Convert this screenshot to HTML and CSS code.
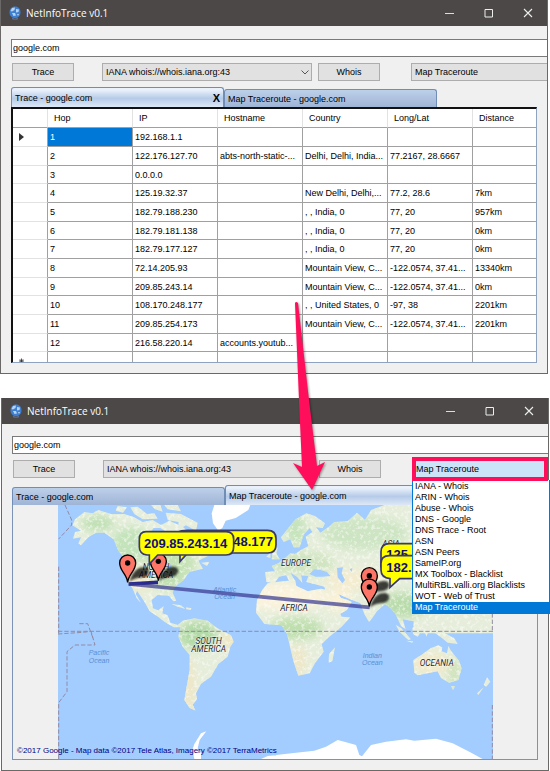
FILE: index.html
```html
<!DOCTYPE html>
<html lang="en">
<head>
<meta charset="utf-8">
<title>NetInfoTrace v0.1</title>
<link rel="stylesheet" href="styles.css">
</head>
<body>
<svg class="defs" width="0" height="0" aria-hidden="true">
  <symbol id="globe" viewBox="0 0 12 14">
    <path d="M6 0.500 C9.500 .5 11.500 3 11.500 6.500 C11.500 10 9 12 6 12 C3 12 .5 10 .5 6.500 C.5 3 2.500 .5 6 .5Z" fill="#3f7fd0"/>
    <path d="M3 2 L6 1.500 L5.500 4 L3 5.500 L1.500 5Z M7 3 L10 3.500 L9.500 6 L7 6.500Z M3 7 L6 7 L7 9.500 L4.500 10Z M8 8L10 8L9 10Z" fill="#b5d4f5"/>
    <path d="M3 12 Q6 13.500 9 12 L8.500 13.500 H3.500Z" fill="#5b80b5"/>
  </symbol>
  <symbol id="minimize" viewBox="0 0 10 10"><path d="M0 5.500H9" stroke="#ddd" fill="none"/></symbol>
  <symbol id="maximize" viewBox="0 0 10 10"><path d="M1 1.500H8.500V9H1Z" stroke="#eee" fill="none"/></symbol>
  <symbol id="close" viewBox="0 0 10 10"><path d="M1 1L9 9M9 1L1 9" stroke="#eee" stroke-width="1.100" fill="none"/></symbol>
</svg>

<main class="desktop">
  <section class="window window-trace">
    <header class="titlebar">
      <svg class="app-icon"><use href="#globe"/></svg>
      <h1>NetInfoTrace v0.1</h1>
      <div class="caption-buttons">
        <button aria-label="Minimize"><svg><use href="#minimize"/></svg></button>
        <button aria-label="Maximize"><svg><use href="#maximize"/></svg></button>
        <button aria-label="Close"><svg><use href="#close"/></svg></button>
      </div>
    </header>
    <div class="content">
      <input class="address" type="text" aria-label="Host" value="google.com">
      <div class="toolbar">
        <button class="btn">Trace</button>
        <div class="combo combo-server"><select aria-label="Whois server"><option>IANA whois://whois.iana.org:43</option></select>
          <svg class="chevron" viewBox="0 0 8 5"><path d="M.5 .5L4 4L7.500 .5" fill="none" stroke="#555"/></svg></div>
        <button class="btn">Whois</button>
        <div class="combo combo-tool"><select aria-label="Tool"><option>Map Traceroute</option></select></div>
      </div>
      <div class="tabs">
        <button class="tab active">Trace - google.com <b>X</b></button>
        <button class="tab">Map Traceroute - google.com</button>
      </div>
      <div class="grid">
        <table>
          <colgroup><col class="c-mark"><col class="c"><col class="c"><col class="c"><col class="c"><col class="c"><col></colgroup>
          <thead><tr><th></th><th>Hop</th><th>IP</th><th>Hostname</th><th>Country</th><th>Long/Lat</th><th>Distance</th></tr></thead>
          <tbody>
            <tr><th><svg class="marker" viewBox="0 0 5 8"><path d="M0 0L5 4L0 8Z" fill="#333"/></svg></th><td class="selected">1</td><td>192.168.1.1</td><td></td><td></td><td></td><td></td></tr>
            <tr><th></th><td>2</td><td>122.176.127.70</td><td>abts-north-static-...</td><td>Delhi, Delhi, India...</td><td>77.2167, 28.6667</td><td></td></tr>
            <tr><th></th><td>3</td><td>0.0.0.0</td><td></td><td></td><td></td><td></td></tr>
            <tr><th></th><td>4</td><td>125.19.32.37</td><td></td><td>New Delhi, Delhi,...</td><td>77.2, 28.6</td><td>7km</td></tr>
            <tr><th></th><td>5</td><td>182.79.188.230</td><td></td><td>, , India, 0</td><td>77, 20</td><td>957km</td></tr>
            <tr><th></th><td>6</td><td>182.79.181.138</td><td></td><td>, , India, 0</td><td>77, 20</td><td>0km</td></tr>
            <tr><th></th><td>7</td><td>182.79.177.127</td><td></td><td>, , India, 0</td><td>77, 20</td><td>0km</td></tr>
            <tr><th></th><td>8</td><td>72.14.205.93</td><td></td><td>Mountain View, C...</td><td>-122.0574, 37.41...</td><td>13340km</td></tr>
            <tr><th></th><td>9</td><td>209.85.243.14</td><td></td><td>Mountain View, C...</td><td>-122.0574, 37.41...</td><td>0km</td></tr>
            <tr><th></th><td>10</td><td>108.170.248.177</td><td></td><td>, , United States, 0</td><td>-97, 38</td><td>2201km</td></tr>
            <tr><th></th><td>11</td><td>209.85.254.173</td><td></td><td>Mountain View, C...</td><td>-122.0574, 37.41...</td><td>2201km</td></tr>
            <tr><th></th><td>12</td><td>216.58.220.14</td><td>accounts.youtub...</td><td></td><td></td><td></td></tr>
            <tr><th><svg class="marker" viewBox="0 0 6 6"><path d="M3 0V6M0 3H6M1 1L5 5M5 1L1 5" stroke="#333"/></svg></th><td></td><td></td><td></td><td></td><td></td><td></td></tr>
          </tbody>
        </table>
      </div>
    </div>
  </section>

  <section class="window window-map">
    <header class="titlebar">
      <svg class="app-icon"><use href="#globe"/></svg>
      <h1>NetInfoTrace v0.1</h1>
      <div class="caption-buttons">
        <button aria-label="Minimize"><svg><use href="#minimize"/></svg></button>
        <button aria-label="Maximize"><svg><use href="#maximize"/></svg></button>
        <button aria-label="Close"><svg><use href="#close"/></svg></button>
      </div>
    </header>
    <div class="content">
      <input class="address" type="text" aria-label="Host" value="google.com">
      <div class="toolbar">
        <button class="btn">Trace</button>
        <div class="combo combo-server"><select aria-label="Whois server"><option>IANA whois://whois.iana.org:43</option></select></div>
        <button class="btn">Whois</button>
        <div class="combo combo-tool combo-open"><select aria-label="Tool"><option>Map Traceroute</option></select>
          <ul class="menu">
            <li>IANA - Whois</li><li>ARIN - Whois</li><li>Abuse - Whois</li><li>DNS - Google</li><li>DNS Trace - Root</li><li>ASN</li><li>ASN Peers</li><li>SameIP.org</li><li>MX Toolbox - Blacklist</li><li>MultiRBL.valli.org Blacklists</li><li>WOT - Web of Trust</li><li class="current">Map Traceroute</li>
          </ul>
        </div>
      </div>
      <div class="tabs">
        <button class="tab">Trace - google.com</button>
        <button class="tab active">Map Traceroute - google.com</button>
      </div>
      <div class="map-panel">
        <svg class="map" viewBox="171 15 1305 762" role="img" aria-label="World map with trace route">
          <defs>
            <clipPath id="land">
              <path d="M222 58L250 36L275 40L292 30L330 42L370 42L400 52L425 66L455 60L480 75L505 62L545 80L570 105L600 140L627 165L592 182L606 206L565 216L548 240L522 260L515 278L526 302L517 304L504 287L470 285L452 300L456 325L472 331L488 318L484 340L500 346L508 368L530 375L545 362L580 355L620 362L648 384L690 406L698 425L688 440L680 470L652 492L630 530L616 540L600 552L585 580L588 598L575 614L584 632L566 624L550 600L557 560L566 510L566 465L545 440L532 410L538 382L518 382L490 365L473 352L446 334L430 305L408 272L404 282L420 308L408 296L394 264L381 248L376 235L386 206L376 180L352 152L338 118L310 98L285 98L262 112L240 136L232 130L240 112L216 116L222 96L240 92L214 76Z"/>
              <path d="M350 18L378 22L366 38L344 32ZM388 22L410 20L438 42L460 40L470 56L425 58L400 42ZM450 15L478 15L485 35L462 28ZM490 15L530 15L540 34L500 28ZM494 38L540 42L590 68L585 92L555 76L535 88L532 66L500 60ZM512 312L540 316L552 326L530 320ZM556 322L572 325L568 330L556 328ZM600 188L625 186L618 198Z"/>
              <path d="M765 338L768 300L784 270L800 250L845 244L882 240L886 258L920 274L960 266L990 274L1006 318L1022 350L1048 352L1022 380L985 410L962 432L968 455L942 490L926 520L892 527L877 482L867 440L858 402L842 376L790 372Z"/>
              <path d="M796 246L792 216L822 214L812 198L832 190L850 176L868 160L882 162L900 150L922 138L914 110L934 96L926 84L908 104L896 142L878 142L868 118L848 126L840 112L862 84L884 58L916 40L942 48L972 70L965 84L945 82L958 98L984 80L1000 66L1040 64L1068 38L1092 60L1110 30L1150 15H1476V400H1237L1238 364L1218 360L1205 358L1214 388L1200 378L1182 340L1168 324L1152 312L1128 334L1114 354L1104 366L1090 342L1078 310L1048 298L1012 282L1020 294L1040 300L1052 306L1038 330L1010 346L992 312L976 282L970 260L940 252L916 246L922 228L900 226L904 248L888 230L868 218L884 246L868 248L855 226L834 230L820 250Z"/>
              <path d="M812 178L816 152L830 142L826 160L836 178ZM796 170L808 158L808 174ZM756 112L788 106L782 120L760 122ZM1184 374L1200 384L1230 418L1222 420L1196 396ZM1234 384L1264 366L1266 388L1250 410L1236 402ZM1214 422L1236 424L1234 428ZM1270 390L1284 392L1276 410ZM1300 398L1332 400L1360 415L1370 432L1340 428L1318 410ZM1002 442L994 484L983 488L984 462ZM1237 480L1262 464L1290 444L1312 436L1324 442L1322 454L1338 460L1342 438L1350 452L1374 482L1382 505L1372 540L1344 548L1320 534L1310 514L1280 520L1250 526L1240 518ZM1350 558H1362L1356 570ZM1458 532L1468 545L1456 560L1448 555ZM1448 562L1432 585L1428 580Z"/>
            </clipPath>
            <filter id="terrain" x="0" y="0" width="100%" height="100%">
              <feTurbulence type="fractalNoise" baseFrequency=".09" numOctaves="3" seed="7"/>
              <feColorMatrix values="0 0 0 0 .98  0 0 0 0 .98  0 0 0 0 .95  5 0 0 0 -2.500"/>
            </filter>
            <filter id="soft" x="-30%" y="-30%" width="160%" height="160%"><feGaussianBlur stdDeviation="12"/></filter>
            <filter id="blur" x="-30%" y="-50%" width="160%" height="200%"><feGaussianBlur stdDeviation="3"/></filter>
            <g id="pin"><path d="M0 0C-3 -26 -24 -34 -24 -58A24 24 0 0 1 24 -58C24 -34 3 -26 0 0Z" fill="#fd7567" stroke="#000" stroke-width="4"/><circle cy="-58" r="8" fill="#000"/></g>
            <path id="pin-shadow" d="M0 0C8 -25 20 -44 43 -44C67 -44 62 -16 38 -14C23 -13 12 -10 0 0Z" fill="#000" opacity=".75" filter="url(#blur)"/>
          </defs>
          <rect x="171" y="15" width="1305" height="762" fill="#a3ccff"/>
          <g clip-path="url(#land)">
            <rect x="171" y="15" width="1305" height="762" fill="#e6eedb"/>
            <g filter="url(#soft)">
              <ellipse cx="290" cy="70" rx="50" ry="24" fill="#bfe0b4"/><ellipse cx="390" cy="135" rx="60" ry="55" fill="#c3e3ba"/>
              <ellipse cx="510" cy="190" rx="75" ry="55" fill="#c5e2b5"/><ellipse cx="415" cy="235" rx="40" ry="38" fill="#f0e9c8"/>
              <ellipse cx="505" cy="240" rx="45" ry="28" fill="#bddfae"/><ellipse cx="590" cy="405" rx="58" ry="42" fill="#b1d9a5"/>
              <ellipse cx="685" cy="420" rx="20" ry="30" fill="#eee5c1"/><ellipse cx="560" cy="560" rx="22" ry="90" fill="#efe6c6"/>
              <ellipse cx="850" cy="290" rx="130" ry="42" fill="#fbf3dc"/><ellipse cx="885" cy="385" rx="80" ry="34" fill="#bfdfae"/>
              <ellipse cx="892" cy="480" rx="22" ry="45" fill="#efe6c6"/><ellipse cx="1015" cy="300" rx="40" ry="34" fill="#faf1d6"/>
              <ellipse cx="900" cy="190" rx="100" ry="34" fill="#cfe4c0"/><ellipse cx="885" cy="90" rx="30" ry="50" fill="#c5e3bb"/>
              <ellipse cx="1060" cy="240" rx="90" ry="30" fill="#f4eccf"/><ellipse cx="1090" cy="100" rx="130" ry="50" fill="#cde5c3"/>
              <ellipse cx="1210" cy="315" rx="65" ry="38" fill="#b9dcab"/><ellipse cx="1290" cy="490" rx="55" ry="30" fill="#f3e9c8"/>
              <ellipse cx="1360" cy="520" rx="20" ry="50" fill="#cfe3bc"/>
            </g>
            <rect x="171" y="15" width="1305" height="762" filter="url(#terrain)" opacity=".5"/>
          </g>
          <g fill="#a3ccff">
            <path d="M440 108L458 84L478 84L500 98L508 92L508 120L490 142L484 160L474 142L448 128ZM478 194L498 186L512 196L506 210L496 200L484 202ZM925 222L940 208L958 210L978 216L988 228L964 230L944 230ZM1008 204L1026 202L1022 220L1032 240L1024 250L1010 232ZM1046 208L1054 204L1052 216ZM1148 186L1166 168L1168 174L1154 190Z"/>
          </g>
          <path d="M640 15L632 40L636 70L652 92L664 84L674 62L704 54L742 30L748 15ZM825 765L885 758L940 752L975 740L1010 720L1030 725L1065 735L1075 765L1083 769L1110 735L1155 725L1215 718L1240 722L1305 716L1355 730L1405 755L1445 777H825ZM580 777L574 750L580 732L600 700L616 694L596 720L590 745L600 760V777ZM780 777L800 768L825 766V777Z" fill="#fff"/>
          <path d="M192 15L212 60V75L173 117M173 200V400M171 394H1476M171 402L245 397L270 394L282 435H222L198 455V575L173 608V777M235 371H260L278 420M1474 340V395M1474 615V777" fill="none" stroke="#938ba3" stroke-width="3" stroke-dasharray="13 6"/>
          <g class="ocean"><text x="671" y="275">Atlantic</text><text x="671" y="297">Ocean</text><text x="294" y="466">Pacific</text><text x="294" y="488">Ocean</text><text x="1114" y="473">Indian</text><text x="1114" y="495">Ocean</text></g>
          <g class="continent"><text x="465" y="209">NORTH</text><text x="465" y="233">AMERICA</text><text x="623" y="432">SOUTH</text><text x="623" y="457">AMERICA</text><text x="885" y="198">EUROPE</text><text x="879" y="333">AFRICA</text><text x="1170" y="142">ASIA</text><text x="1307" y="498">OCEANIA</text></g>
          <use href="#pin-shadow" x="385" y="246"/><use href="#pin-shadow" x="473" y="244"/>
          <use href="#pin-shadow" x="1106" y="287"/><use href="#pin-shadow" x="1106" y="323"/>
          <path d="M383 252L471 247" stroke="#2a2a8c" stroke-width="11"/>
          <path d="M383 252L1106 322" stroke="#34348f" stroke-opacity=".7" stroke-width="11"/>
          <use href="#pin" x="472" y="242"/><use href="#pin" x="380" y="247"/>
          <use href="#pin" x="1105" y="285"/><use href="#pin" x="1105" y="319"/>
          <g class="bubble">
            <path d="M560 91H800Q825 91 825 116V134Q825 159 800 159H560L537 185V159Q520 155 520 134V116Q520 91 560 91Z"/><text x="816" y="138" text-anchor="end">248.177</text>
            <path d="M435 95H675Q698 95 698 118V140Q698 165 675 165H470L445 192V165H438Q415 162 415 140V118Q415 95 435 95Z"/><text x="429" y="143">209.85.243.14</text>
            <path d="M1165 131H1420V200H1140V156Q1140 131 1165 131Z"/><text x="1156" y="177">125.</text>
            <path d="M1165 167H1420V236H1196L1167 262V236Q1140 233 1140 210V190Q1140 167 1165 167Z"/><text x="1156" y="215">182.</text>
          </g>
        </svg>
        <p class="credit">©2017 Google - Map data ©2017 Tele Atlas, Imagery ©2017 TerraMetrics</p>
      </div>
    </div>
  </section>

  <svg class="arrow" viewBox="0 0 36 192" aria-hidden="true"><path d="M3 3Q4 1 6 3L17 100L25 166L33 162L20 190L1 163L10 167L7 100Z" fill="#ff0f5b"/></svg>
</main>
</body>
</html>
```
FILE: styles.css
```css
* { box-sizing: border-box; }

body {
  margin: 0;
  background: #fff;
  color: #000;
  font: 9px/14px "Liberation Sans", sans-serif;
}

button, input, select { font: inherit; color: inherit; border-radius: 0; }
.defs { position: absolute; }

.desktop {
  position: relative;
  display: flex;
  flex-direction: column;
  gap: 24px;
}

.window {
  background: #f0f0f0;
  border: 1px solid #6b6967;
  border-top: 0;
}
.window-trace { margin-right: 2px; }
.window-map { margin: 0 1px; }

.titlebar {
  display: flex;
  align-items: center;
  height: 26px;
  padding-left: 8px;
  background: #4b4847;
  color: #fff;
}
.titlebar h1 {
  flex: 1;
  margin: 0 0 0 5px;
  font: 10px/14px "Open Sans", "Noto Sans", sans-serif;
}
.app-icon { width: 12px; height: 14px; }
.caption-buttons { display: flex; }
.caption-buttons button {
  width: 39px;
  height: 26px;
  padding: 0;
  border: 0;
  background: none;
}
.caption-buttons svg { display: block; width: 10px; height: 10px; margin: 0 auto; }

.content { padding: 13px 0 10px 10px; }
.window-map .content { padding-top: 12px; }

.address {
  display: block;
  width: 100%;
  height: 18px;
  padding: 0 1px;
  border: 1px solid #7a7a7a;
  border-right: 0;
  background: #fff;
}

.toolbar {
  display: grid;
  grid-template-columns: 62px 210px 62px 1fr;
  margin: 6px 0 6px 1px;
}
.toolbar { grid-template-columns: 90px 216px 93px 1fr; }
.window-map .toolbar { margin-bottom: 7px; }
.btn {
  width: 62px;
  height: 18px;
  padding: 0;
  border: 1px solid #adadad;
  background: #e1e1e1;
}
.combo { position: relative; height: 18px; }
.combo-server { margin-right: 6px; }
.combo select {
  display: block;
  width: 100%;
  height: 18px;
  padding: 0 3px;
  border: 1px solid #adadad;
  background: #e1e1e1;
  appearance: none;
}
.combo-tool select { border-right: 0; }
.chevron { position: absolute; top: 7px; right: 3px; width: 8px; height: 5px; }

.combo-open { z-index: 3; }
.combo-open select {
  position: relative;
  z-index: 1;
  height: 24px;
  margin: -3px 0;
  padding: 0;
  border: 4px solid #ff0f5b;
  background: #cce4f7;
}
.menu {
  position: absolute;
  top: 20px;
  left: 0;
  right: -2px;
  margin: 0;
  padding: 1px 0 0;
  border: 1px solid #0078d7;
  border-top: 0;
  background: #fff;
  list-style: none;
}
.menu li { height: 11px; padding-left: 2px; line-height: 11px; white-space: nowrap; }
.menu .current { background: #0078d7; color: #fff; }

.tabs {
  display: flex;
  align-items: flex-end;
  height: 20px;
}
.tab {
  width: 213px;
  height: 18px;
  padding: 0 3px;
  border: 1px solid #6f8db5;
  border-bottom: 0;
  border-radius: 3px 3px 0 0;
  background: linear-gradient(#bdd0ea, #9fb5d6);
  text-align: left;
}
.tab.active {
  display: flex;
  align-items: center;
  justify-content: space-between;
  height: 20px;
  background: linear-gradient(#eaf1fb 10%, #b6cbe8 55%, #dde8f6);
}
.tab b { font-size: 11px; }

.grid {
  height: 256px;
  margin-right: 10px;
  overflow: hidden;
  border: 1px solid #8fa3c0;
  border-top: 2px solid #111;
  border-left: 2px solid #111;
  background: #fff;
}
.grid table {
  width: 100%;
  border-collapse: separate;
  border-spacing: 0;
  table-layout: fixed;
}
.c-mark { width: 35px; }
.c { width: 85px; }
.grid tr { height: 19px; }
.grid tbody tr:nth-child(3n) { height: 18px; }
.grid th, .grid td {
  padding: 0 2px;
  border-right: 1px solid #a0a0a0;
  border-bottom: 1px solid #a0a0a0;
  font-weight: normal;
  text-align: left;
  white-space: nowrap;
}
.grid thead th { padding-left: 6px; border-right-color: #e2e2e2; }
.grid tbody th { border-bottom-color: #e2e2e2; }
.grid tr > :last-child { border-right: 0; }
.grid .selected { background: #0078d7; color: #fff; }
.marker { display: block; width: 5px; height: 8px; margin-left: 4px; }

.map-panel {
  position: relative;
  margin-right: 10px;
  border: 1px solid #7d93b5;
  border-top: 0;
}
.map { display: block; width: 435px; max-width: 100%; margin: 0 auto; }
.credit {
  position: absolute;
  left: 4px;
  bottom: 2px;
  margin: 0;
  color: #000080;
  font-size: 8px;
  line-height: 12px;
}
.map text { font-family: "Liberation Sans", sans-serif; }
.ocean text { fill: #5c8fd0; font-size: 21px; font-style: italic; text-anchor: middle; }
.map .continent text {
  fill: #222;
  stroke: #fff;
  stroke-width: 2px;
  paint-order: stroke;
  font-family: Roboto, sans-serif;
  font-size: 25px;
  font-style: italic;
  text-anchor: middle;
}
.bubble path { fill: #ff0; stroke: #38386a; stroke-width: 5px; }
.bubble text { fill: #101070; font-size: 39px; font-weight: bold; }

.arrow {
  position: absolute;
  z-index: 4;
  top: 300px;
  left: 292px;
  width: 36px;
  height: 192px;
  filter: drop-shadow(1px 1px 1px #0006);
}
```
